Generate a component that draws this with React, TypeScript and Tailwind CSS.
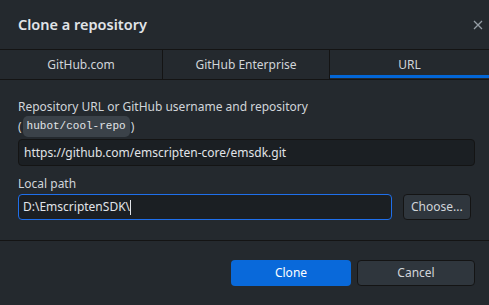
import React from 'react';

const font = { fontFamily: '"Segoe UI", "Noto Sans", "Open Sans", sans-serif' };

export default function App() {
  const tabs = [
    { label: 'GitHub.com', w: 'w-[163px]' },
    { label: 'GitHub Enterprise', w: 'w-[167px]' },
    { label: 'URL', w: 'flex-1', active: true },
  ];

  return (
    <div className="w-[489px] h-[305px] bg-[#24292e] text-[#d1d5da] flex flex-col overflow-hidden" style={font}>
      {/* header */}
      <div className="h-[49px] flex items-center justify-between pl-[18px] pr-0 shrink-0">
        <h1 className="text-[14.5px] font-semibold text-[#e1e4e8]">Clone a repository</h1>
        <button className="w-[22px] h-[22px] flex items-center justify-center text-[#959da5]">
          <svg width="10" height="10" viewBox="0 0 10 10">
            <path d="M1 1L9 9M9 1L1 9" stroke="currentColor" strokeWidth="1.3" />
          </svg>
        </button>
      </div>

      {/* tabs */}
      <div className="flex h-[31px] border-y border-[#141414] shrink-0">
        {tabs.map((t, i) => (
          <div
            key={t.label}
            className={`${t.w} relative flex items-center justify-center text-[12px] ${i < 2 ? 'border-r border-[#141414]' : ''}`}
          >
            {t.label}
            {t.active && <div className="absolute left-0 right-0 bottom-[1px] h-[3px] bg-[#0366d6]" />}
          </div>
        ))}
      </div>

      {/* body */}
      <div className="flex-1 px-[18px] pt-[18px] text-[12px]">
        <div className="leading-[17px]">Repository URL or GitHub username and repository</div>
        <div className="flex items-center h-[21px] mt-[1px]">
          (
          <code className="bg-[#3b4249] rounded-[5px] px-[4px] py-[2px] mx-[1px] text-[11px] text-[#e1e4e8]" style={{ fontFamily: '"Liberation Mono", monospace' }}>
            hubot/cool-repo
          </code>
          )
        </div>
        <div className="mt-[2px] h-[27px] w-[457px] rounded-[4px] bg-[#1b1f23] border border-[#141414] flex items-center px-[5px] text-[12px] text-[#e1e4e8]">
          https://github.com/emscripten-core/emsdk.git
        </div>

        <div className="mt-[9px] leading-[17px]">Local path</div>
        <div className="mt-[2px] flex gap-[11px]">
          <div className="h-[26px] w-[378px] rounded-[4px] bg-[#1b1f23] border border-[#1f6feb] flex items-center px-[4px] text-[12px] text-[#e1e4e8]">
            D:\EmscriptenSDK\
            <span className="w-[1px] h-[15px] bg-[#e1e4e8]" />
          </div>
          <button className="h-[26px] w-[69px] rounded-[4px] bg-[#2f363d] border border-[#141414] text-[12px] text-[#d1d5da]">
            Choose...
          </button>
        </div>
      </div>

      {/* footer */}
      <div className="h-[65px] border-t border-[#141414] flex items-start justify-end gap-[6px] pr-[14px] pt-[19px] shrink-0">
        <button className="h-[26px] w-[120px] rounded-[4px] bg-[#0969da] text-white text-[12px]">Clone</button>
        <button className="h-[26px] w-[118px] rounded-[4px] bg-[#2f363d] border border-[#141414] text-[12px] text-[#d1d5da]">Cancel</button>
      </div>
    </div>
  );
}
